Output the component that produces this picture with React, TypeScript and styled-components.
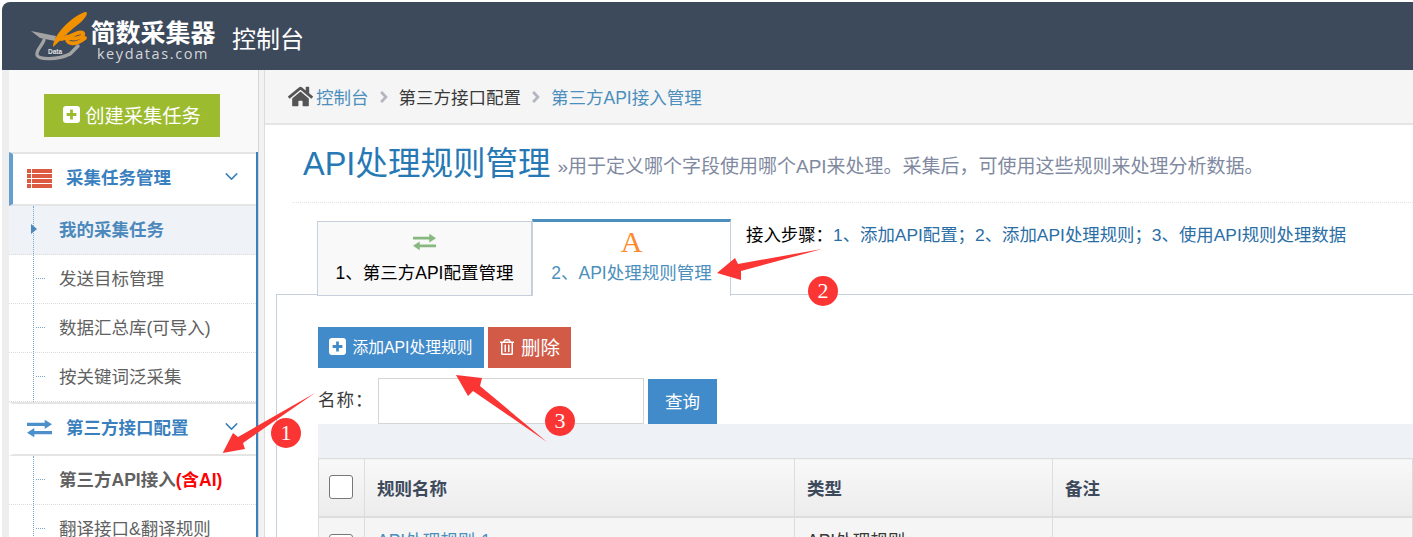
import React from 'react'
import styled, { createGlobalStyle } from 'styled-components'
import { ChevronDown } from 'lucide-react'
import { FaAngleRight, FaHome, FaRegTrashAlt } from 'react-icons/fa'

const FONT = `"Liberation Sans", "Noto Sans CJK SC", sans-serif`

const GlobalStyle = createGlobalStyle`
  html, body {
    margin: 0;
    padding: 0;
    background: #fff;
  }

  * {
    box-sizing: border-box;
  }
`

const Page = styled.div`
  position: relative;
  width: 1413px;
  height: 537px;
  padding: 2px 0 0 2px;
  overflow: hidden;
  font-family: ${FONT};
  font-size: 17.5px;
  color: #393939;
`

const Header = styled.header`
  display: flex;
  align-items: center;
  height: 68px;
  padding-left: 28px;
  background: #3d4a5c;
  border-top-left-radius: 8px;
  color: #fff;
`

const LogoMark = styled.svg`
  width: 60px;
  height: 52px;
  flex: none;
`

const LogoText = styled.div`
  display: flex;
  flex-direction: column;
  align-items: center;
  width: 126px;
  margin: 6px 0 0 0;
`

const LogoName = styled.div`
  font-size: 25px;
  font-weight: 700;
  line-height: 28px;
  white-space: nowrap;
`

const LogoDomain = styled.div`
  font-family: "Open Sans", sans-serif;
  font-size: 14.5px;
  line-height: 13px;
  letter-spacing: 1.6px;
  color: #d4d6da;
`

const HeaderTitle = styled.div`
  margin: 3px 0 0 16px;
  font-size: 24px;
`

const Body = styled.div`
  display: flex;
  height: 467px;
`

const Rail = styled.div`
  width: 7px;
  flex: none;
  background: #eeeeee;
`

const Sidebar = styled.aside`
  width: 250px;
  flex: none;
  padding-top: 24px;
  background: #f9f9f9;
  border-right: 1px solid #d5d5d5;
`

const CreateButton = styled.button`
  display: flex;
  align-items: center;
  justify-content: center;
  gap: 5px;
  width: 176px;
  height: 43px;
  margin: 0 0 15px 35px;
  padding: 0 0 2px;
  border: 0;
  background: #9cbb2e;
  color: #fff;
  font-family: ${FONT};
  font-size: 19.3px;
`

const Gutter = styled.div`
  width: 6px;
  flex: none;
  background: #f2f2f2;
  border-right: 1px solid #dcdcdc;
`

const Menu = styled.nav`
  width: 249px;
  background: #fff;
  border-right: 2px solid #3a7fbe;
`

const GroupHead = styled.div<{ $open?: boolean }>`
  display: flex;
  align-items: center;
  height: 54px;
  padding: 0 14px 5px 14px;
  border-top: 2px solid #e5e5e5;
  border-bottom: 2px solid #e5e5e5;
  border-left: 4px solid ${p => (p.$open ? '#64a0cf' : 'transparent')};
  color: #3a7fbe;
  font-weight: 700;
`

const GroupIcon = styled.svg<{ $color: string }>`
  width: 25px;
  height: 19px;
  flex: none;
  margin: 4px 14px 0 0;
  fill: ${p => p.$color};
`

const GroupLabel = styled.span`
  flex: 1;
`

const Chevron = styled(ChevronDown)`
  width: 21px;
  height: 21px;
  color: #3a7fbe;
  stroke-width: 1.7;
`

const Tree = styled.div`
  position: relative;

  &::before {
    content: '';
    position: absolute;
    z-index: 1;
    top: 0;
    bottom: 0;
    left: 24px;
    border-left: 1px dotted #7ba7cf;
  }
`

const Item = styled.div<{ $active?: boolean; $strong?: boolean }>`
  position: relative;
  display: flex;
  align-items: center;
  height: 49px;
  padding: 0 0 4px 50px;
  border-bottom: 1px dotted #dcdcdc;
  background: ${p => (p.$active ? '#eff3f8' : '#fff')};
  color: ${p => (p.$active ? '#4b88bb' : '#616161')};
  font-weight: ${p => (p.$active || p.$strong ? 700 : 400)};
  white-space: nowrap;

  &::before {
    content: '';
    position: absolute;
    z-index: 2;
    left: ${p => (p.$active ? '22px' : '27px')};
    ${p =>
      p.$active
        ? `
      top: 18px;
      border-left: 6px solid #4b88bb;
      border-top: 5px solid transparent;
      border-bottom: 5px solid transparent;
    `
        : `
      top: 23px;
      width: 9px;
      border-top: 1px dotted #7ba7cf;
    `}
  }
`

const RedText = styled.span`
  color: #f00;
`

const Main = styled.main`
  flex: 1;
  min-width: 0;
  background: #fff;
`

const Breadcrumb = styled.div`
  display: flex;
  align-items: center;
  height: 55px;
  padding-left: 23px;
  background: #f5f5f5;
  border-bottom: 2px solid #e5e5e5;
`

const HomeIcon = styled(FaHome)`
  font-size: 25px;
  color: #555;
  margin-right: 3px;
`

const CrumbLink = styled.span<{ $plain?: boolean }>`
  color: ${p => (p.$plain ? '#393939' : '#4c8fbd')};
`

const CrumbSep = styled(FaAngleRight)`
  margin: 0 6px;
  font-size: 18px;
  color: #b2b6bf;
`

const PageHeader = styled.div`
  display: flex;
  align-items: center;
  height: 78px;
  margin-left: 27px;
  padding: 0 0 7px 11px;
  border-bottom: 1px dotted #e2e2e2;
  white-space: nowrap;
`

const PageTitle = styled.h1`
  margin: 0;
  font-size: 32.5px;
  font-weight: 400;
  color: #2679b5;
`

const PageSub = styled.small`
  margin-left: 7px;
  padding-top: 9px;
  font-size: 19px;
  color: #8089a0;
`

const TabRow = styled.div`
  display: flex;
  align-items: flex-end;
  height: 77px;
  margin: 16px 0 -2px 52px;
  position: relative;
  z-index: 1;
`

const Tab = styled.div<{ $active?: boolean }>`
  display: flex;
  flex-direction: column;
  align-items: center;
  width: ${p => (p.$active ? '199px' : '215px')};
  height: ${p => (p.$active ? '77px' : '75px')};
  padding-top: ${p => (p.$active ? '5px' : '9px')};
  background: ${p => (p.$active ? '#fff' : '#f9f9f9')};
  border: 1px solid #c5d0dc;
  border-top: ${p => (p.$active ? '3px solid #4c8fbd' : '1px solid #c5d0dc')};
  border-bottom: ${p => (p.$active ? '0' : '1px solid #c5d0dc')};
  color: ${p => (p.$active ? '#4c8fbd' : '#000')};
  white-space: nowrap;
`

const TabSwap = styled.svg`
  width: 23px;
  height: 18px;
  margin: 2px 0 8px;
  fill: #87b87f;
`

const TabGlyph = styled.span`
  height: 32px;
  font-family: "Liberation Serif", serif;
  font-size: 30px;
  line-height: 30px;
  color: #ff892a;
`

const StepTip = styled.div`
  align-self: flex-start;
  margin: 0 0 0 15px;
  padding-top: 2px;
  font-size: 17.4px;
  color: #000;
  white-space: nowrap;
`

const StepText = styled.span`
  color: #2a6ea6;
`

const Panel = styled.section`
  margin-left: 11px;
  padding: 32px 0 0 41px;
  border-top: 1px solid #c5d0dc;
  border-left: 1px solid #c5d0dc;
`

const ButtonRow = styled.div`
  display: flex;
  gap: 4px;
`

const ActionButton = styled.button<{ $color: string; $width: number; $size: number }>`
  display: flex;
  align-items: center;
  justify-content: center;
  gap: 6px;
  width: ${p => p.$width}px;
  height: 41px;
  padding: 0 0 2px;
  border: 0;
  background: ${p => p.$color};
  color: #fff;
  font-family: ${FONT};
  font-size: ${p => p.$size}px;
  white-space: nowrap;
`

const SearchRow = styled.div`
  display: flex;
  align-items: flex-end;
  height: 46px;
  margin-top: 10px;
`

const SearchLabel = styled.label`
  align-self: center;
  width: 60px;
  margin-top: -5px;
  color: #393939;
  letter-spacing: 1px;
  white-space: nowrap;
`

const SearchInput = styled.input`
  width: 266px;
  height: 46px;
  margin-right: 4px;
  border: 1px solid #d5d5d5;
  background: #fff;
`

const SearchButton = styled.button`
  width: 69px;
  height: 45px;
  padding: 0 0 2px;
  border: 0;
  background: #428bca;
  color: #fff;
  font-family: ${FONT};
  font-size: 17.5px;
`

const Band = styled.div`
  height: 34px;
  background: #eef1f6;
`

const Table = styled.table`
  width: 1095px;
  table-layout: fixed;
  border-collapse: collapse;
`

const Th = styled.th<{ $width?: number }>`
  width: ${p => (p.$width ? `${p.$width}px` : 'auto')};
  height: 58px;
  padding: 0 0 0 12px;
  background: linear-gradient(#f8f8f8, #ececec);
  border: 1px solid #dddddd;
  border-bottom-width: 2px;
  color: #3d4a5c;
  font-size: 17.5px;
  font-weight: 700;
  text-align: left;
`

const Td = styled.td`
  height: 50px;
  padding: 9px 0 0 12px;
  background: #f5f5f5;
  border: 1px solid #dddddd;
  vertical-align: top;
`

const RuleLink = styled.span`
  color: #4c8fbd;
`

const Check = styled.span<{ $top?: number }>`
  display: block;
  width: 24px;
  height: 24px;
  margin: ${p => p.$top ?? 0}px 0 0 -2px;
  background: #fff;
  border: 1px solid #777;
  border-radius: 3px;
`

// annotation arrows drawn over the screenshot
const Marks = styled.svg`
  position: absolute;
  top: 0;
  left: 0;
  width: 1413px;
  height: 537px;
  pointer-events: none;
  z-index: 2;
`

const Badge = styled.div<{ $x: number; $y: number }>`
  position: absolute;
  left: ${p => p.$x - 15}px;
  top: ${p => p.$y - 15}px;
  z-index: 3;
  display: flex;
  align-items: center;
  justify-content: center;
  width: 30px;
  height: 30px;
  border-radius: 50%;
  background: #fb3434;
  color: #fff;
  font-family: "Liberation Serif", serif;
  font-size: 22px;
`

const EXCHANGE = 'M0 3.5H17V0.5L24 5L17 9.5V6.5H0ZM24 11.5H7V8.5L0 13L7 17.5V14.5H24Z'

const PlusBox: React.FC<{ size: number }> = ({ size }) => (
  <svg width={size} height={size} viewBox="0 0 16 16" aria-hidden="true">
    <path
      fillRule="evenodd"
      fill="#fff"
      d="M3 0H13A3 3 0 0 1 16 3V13A3 3 0 0 1 13 16H3A3 3 0 0 1 0 13V3A3 3 0 0 1 3 0ZM6.7 3.4V6.7H3.4V9.3H6.7V12.6H9.3V9.3H12.6V6.7H9.3V3.4Z"
    />
  </svg>
)

const App: React.FC = () => {
  return (
    <Page>
      <GlobalStyle />
      <Header>
        <LogoMark viewBox="30 10 60 52">
          <path d="M31 31 L56 36 L55 41 L40 38 Z" fill="#a3a3a3" />
          <path
            d="M44 40 C42 46 36 50 37 55 C38 60 58 60 70 54 L78 46"
            fill="none"
            stroke="#a3a3a3"
            strokeWidth="3.4"
            strokeLinecap="round"
          />
          <text x="48" y="54" fontSize="6.5" fontWeight="700" fill="#e2e2e2" fontFamily="Liberation Sans, sans-serif">
            Data
          </text>
          <path d="M53 47 C53 35 72 16 85 12 C90 11 85 20 76 26 C66 34 59 42 53 47 Z" fill="#f29100" />
          <path
            d="M61 39 C69 38 80 30 83 33 C85 38 72 40 67 37 C65 43 74 47 85 38"
            fill="none"
            stroke="#f29100"
            strokeWidth="3.8"
            strokeLinecap="round"
          />
        </LogoMark>
        <LogoText>
          <LogoName>简数采集器</LogoName>
          <LogoDomain>keydatas.com</LogoDomain>
        </LogoText>
        <HeaderTitle>控制台</HeaderTitle>
      </Header>
      <Body>
        <Rail />
        <Sidebar>
          <CreateButton>
            <PlusBox size={17} />
            创建采集任务
          </CreateButton>
          <Menu>
            <GroupHead $open>
              <GroupIcon $color="#dd5a43" viewBox="0 0 25 19">
                <path d="M0 0H4V4H0ZM5 0H25V4H5ZM0 5H4V9H0ZM5 5H25V9H5ZM0 10H4V14H0ZM5 10H25V14H5ZM0 15H4V19H0ZM5 15H25V19H5Z" />
              </GroupIcon>
              <GroupLabel>采集任务管理</GroupLabel>
              <Chevron />
            </GroupHead>
            <Tree>
              <Item $active>我的采集任务</Item>
              <Item>发送目标管理</Item>
              <Item>数据汇总库(可导入)</Item>
              <Item>按关键词泛采集</Item>
            </Tree>
            <GroupHead>
              <GroupIcon $color="#4c8fcb" viewBox="0 0 24 18">
                <path d={EXCHANGE} />
              </GroupIcon>
              <GroupLabel>第三方接口配置</GroupLabel>
              <Chevron />
            </GroupHead>
            <Tree>
              <Item $strong>
                第三方API接入<RedText>(含AI)</RedText>
              </Item>
              <Item>翻译接口&amp;翻译规则</Item>
            </Tree>
          </Menu>
        </Sidebar>
        <Gutter />
        <Main>
          <Breadcrumb>
            <HomeIcon />
            <CrumbLink>控制台</CrumbLink>
            <CrumbSep />
            <CrumbLink $plain>第三方接口配置</CrumbLink>
            <CrumbSep />
            <CrumbLink>第三方API接入管理</CrumbLink>
          </Breadcrumb>
          <PageHeader>
            <PageTitle>API处理规则管理</PageTitle>
            <PageSub>»用于定义哪个字段使用哪个API来处理。采集后，可使用这些规则来处理分析数据。</PageSub>
          </PageHeader>
          <TabRow>
            <Tab>
              <TabSwap viewBox="0 0 24 18">
                <path d={EXCHANGE} />
              </TabSwap>
              1、第三方API配置管理
            </Tab>
            <Tab $active>
              <TabGlyph>A</TabGlyph>
              2、API处理规则管理
            </Tab>
            <StepTip>
              接入步骤：<StepText>1、添加API配置；2、添加API处理规则；3、使用API规则处理数据</StepText>
            </StepTip>
          </TabRow>
          <Panel>
            <ButtonRow>
              <ActionButton $color="#428bca" $width={166} $size={15.8}>
                <PlusBox size={17} />
                添加API处理规则
              </ActionButton>
              <ActionButton $color="#d15b47" $width={83} $size={19.5}>
                <FaRegTrashAlt size={16} />
                删除
              </ActionButton>
            </ButtonRow>
            <SearchRow>
              <SearchLabel>名称：</SearchLabel>
              <SearchInput />
              <SearchButton>查询</SearchButton>
            </SearchRow>
            <Band />
            <Table>
              <thead>
                <tr>
                  <Th $width={46}>
                    <Check />
                  </Th>
                  <Th $width={430}>规则名称</Th>
                  <Th $width={258}>类型</Th>
                  <Th>备注</Th>
                </tr>
              </thead>
              <tbody>
                <tr>
                  <Td>
                    <Check $top={7} />
                  </Td>
                  <Td>
                    <RuleLink>API处理规则-1</RuleLink>
                  </Td>
                  <Td>API处理规则</Td>
                  <Td />
                </tr>
              </tbody>
            </Table>
          </Panel>
        </Main>
      </Body>
      <Marks viewBox="0 0 1413 537">
        <polygon points="315,393 238,437 233,433 222.7,453 245,449 243,443" fill="#fb3434" />
        <polygon points="822,249 738,264 735,258 717,273 741,280 741,271" fill="#fb3434" />
        <polygon points="547,442 480,386 482,378 456,375 468,396 473,391" fill="#fb3434" />
      </Marks>
      <Badge $x={286} $y={433}>1</Badge>
      <Badge $x={823} $y={291}>2</Badge>
      <Badge $x={560} $y={421}>3</Badge>
    </Page>
  )
}

export default App
